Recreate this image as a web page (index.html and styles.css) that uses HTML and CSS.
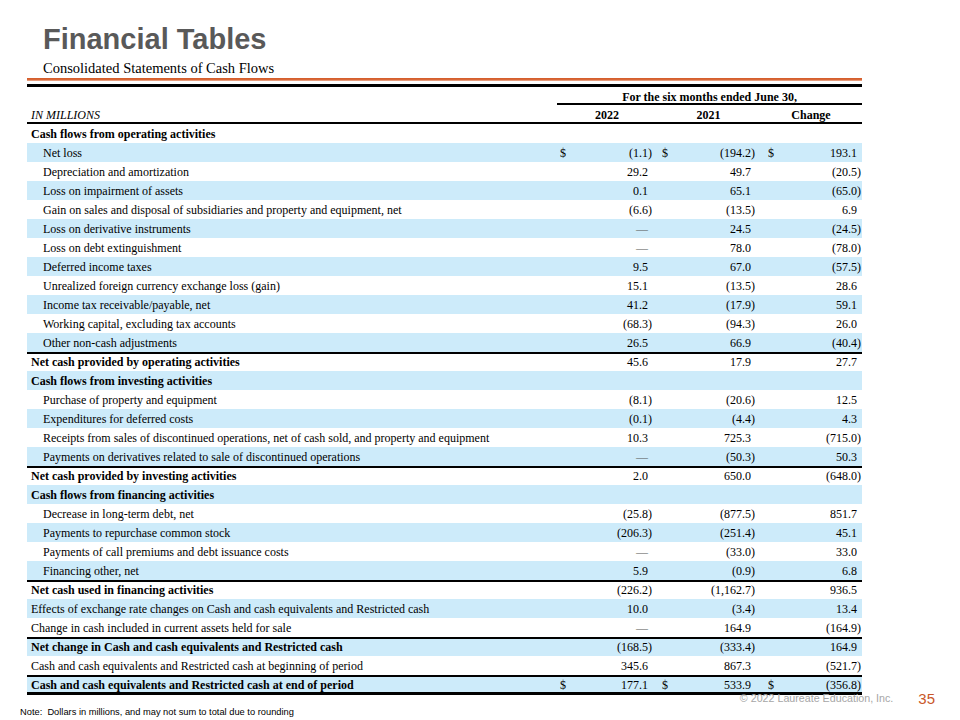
FILE: index.html
```html
<!DOCTYPE html>
<html lang="en">

<head>
    <meta charset="UTF-8">
    <title>Financial Tables</title>
    <link rel="stylesheet" href="styles.css">
</head>

<body>
    <div class="slide">
        <h1 class="title">Financial Tables</h1>
        <h2 class="subtitle">Consolidated Statements of Cash Flows</h2>
        <div class="rule-orange"></div>
        <div class="rule-black"></div>

        <table class="cf">
            <colgroup>
                <col class="c-label">
                <col class="c-d1">
                <col class="c-v1">
                <col class="c-d2">
                <col class="c-v2">
                <col class="c-d3">
                <col class="c-v3">
            </colgroup>
            <thead>
                <tr class="h1">
                    <th></th>
                    <th colspan="6" class="period">For the six months ended June 30,</th>
                </tr>
                <tr class="h2">
                    <th class="units">IN MILLIONS</th>
                    <th colspan="2">2022</th>
                    <th colspan="2">2021</th>
                    <th colspan="2">Change</th>
                </tr>
            </thead>
            <tbody>
                <tr class="sec"><td>Cash flows from operating activities</td><td></td><td></td><td></td><td></td><td></td><td></td></tr>
                <tr class="band"><td class="ind">Net loss</td><td class="d1">$</td><td class="v1">(1.1)</td><td class="d2">$</td><td class="v2">(194.2)</td><td class="d3">$</td><td class="v3"><span class="p">193.1</span></td></tr>
                <tr><td class="ind">Depreciation and amortization</td><td></td><td class="v1"><span class="p">29.2</span></td><td></td><td class="v2"><span class="p">49.7</span></td><td></td><td class="v3">(20.5)</td></tr>
                <tr class="band"><td class="ind">Loss on impairment of assets</td><td></td><td class="v1"><span class="p">0.1</span></td><td></td><td class="v2"><span class="p">65.1</span></td><td></td><td class="v3">(65.0)</td></tr>
                <tr><td class="ind">Gain on sales and disposal of subsidiaries and property and equipment, net</td><td></td><td class="v1">(6.6)</td><td></td><td class="v2">(13.5)</td><td></td><td class="v3"><span class="p">6.9</span></td></tr>
                <tr class="band"><td class="ind">Loss on derivative instruments</td><td></td><td class="v1"><span class="p dash">—</span></td><td></td><td class="v2"><span class="p">24.5</span></td><td></td><td class="v3">(24.5)</td></tr>
                <tr><td class="ind">Loss on debt extinguishment</td><td></td><td class="v1"><span class="p dash">—</span></td><td></td><td class="v2"><span class="p">78.0</span></td><td></td><td class="v3">(78.0)</td></tr>
                <tr class="band"><td class="ind">Deferred income taxes</td><td></td><td class="v1"><span class="p">9.5</span></td><td></td><td class="v2"><span class="p">67.0</span></td><td></td><td class="v3">(57.5)</td></tr>
                <tr><td class="ind">Unrealized foreign currency exchange loss (gain)</td><td></td><td class="v1"><span class="p">15.1</span></td><td></td><td class="v2">(13.5)</td><td></td><td class="v3"><span class="p">28.6</span></td></tr>
                <tr class="band"><td class="ind">Income tax receivable/payable, net</td><td></td><td class="v1"><span class="p">41.2</span></td><td></td><td class="v2">(17.9)</td><td></td><td class="v3"><span class="p">59.1</span></td></tr>
                <tr><td class="ind">Working capital, excluding tax accounts</td><td></td><td class="v1">(68.3)</td><td></td><td class="v2">(94.3)</td><td></td><td class="v3"><span class="p">26.0</span></td></tr>
                <tr class="band"><td class="ind">Other non-cash adjustments</td><td></td><td class="v1"><span class="p">26.5</span></td><td></td><td class="v2"><span class="p">66.9</span></td><td></td><td class="v3">(40.4)</td></tr>
                <tr class="total"><td class="b">Net cash provided by operating activities</td><td></td><td class="v1"><span class="p">45.6</span></td><td></td><td class="v2"><span class="p">17.9</span></td><td></td><td class="v3"><span class="p">27.7</span></td></tr>
                <tr class="band sec"><td>Cash flows from investing activities</td><td></td><td></td><td></td><td></td><td></td><td></td></tr>
                <tr><td class="ind">Purchase of property and equipment</td><td></td><td class="v1">(8.1)</td><td></td><td class="v2">(20.6)</td><td></td><td class="v3"><span class="p">12.5</span></td></tr>
                <tr class="band"><td class="ind">Expenditures for deferred costs</td><td></td><td class="v1">(0.1)</td><td></td><td class="v2">(4.4)</td><td></td><td class="v3"><span class="p">4.3</span></td></tr>
                <tr><td class="ind">Receipts from sales of discontinued operations, net of cash sold, and property and equipment</td><td></td><td class="v1"><span class="p">10.3</span></td><td></td><td class="v2"><span class="p">725.3</span></td><td></td><td class="v3">(715.0)</td></tr>
                <tr class="band"><td class="ind">Payments on derivatives related to sale of discontinued operations</td><td></td><td class="v1"><span class="p dash">—</span></td><td></td><td class="v2">(50.3)</td><td></td><td class="v3"><span class="p">50.3</span></td></tr>
                <tr class="total"><td class="b">Net cash provided by investing activities</td><td></td><td class="v1"><span class="p">2.0</span></td><td></td><td class="v2"><span class="p">650.0</span></td><td></td><td class="v3">(648.0)</td></tr>
                <tr class="band sec"><td>Cash flows from financing activities</td><td></td><td></td><td></td><td></td><td></td><td></td></tr>
                <tr><td class="ind">Decrease in long-term debt, net</td><td></td><td class="v1">(25.8)</td><td></td><td class="v2">(877.5)</td><td></td><td class="v3"><span class="p">851.7</span></td></tr>
                <tr class="band"><td class="ind">Payments to repurchase common stock</td><td></td><td class="v1">(206.3)</td><td></td><td class="v2">(251.4)</td><td></td><td class="v3"><span class="p">45.1</span></td></tr>
                <tr><td class="ind">Payments of call premiums and debt issuance costs</td><td></td><td class="v1"><span class="p dash">—</span></td><td></td><td class="v2">(33.0)</td><td></td><td class="v3"><span class="p">33.0</span></td></tr>
                <tr class="band"><td class="ind">Financing other, net</td><td></td><td class="v1"><span class="p">5.9</span></td><td></td><td class="v2">(0.9)</td><td></td><td class="v3"><span class="p">6.8</span></td></tr>
                <tr class="total"><td class="b">Net cash used in financing activities</td><td></td><td class="v1">(226.2)</td><td></td><td class="v2">(1,162.7)</td><td></td><td class="v3"><span class="p">936.5</span></td></tr>
                <tr class="band"><td>Effects of exchange rate changes on Cash and cash equivalents and Restricted cash</td><td></td><td class="v1"><span class="p">10.0</span></td><td></td><td class="v2">(3.4)</td><td></td><td class="v3"><span class="p">13.4</span></td></tr>
                <tr><td>Change in cash included in current assets held for sale</td><td></td><td class="v1"><span class="p dash">—</span></td><td></td><td class="v2"><span class="p">164.9</span></td><td></td><td class="v3">(164.9)</td></tr>
                <tr class="band total"><td class="b">Net change in Cash and cash equivalents and Restricted cash</td><td></td><td class="v1">(168.5)</td><td></td><td class="v2">(333.4)</td><td></td><td class="v3"><span class="p">164.9</span></td></tr>
                <tr><td>Cash and cash equivalents and Restricted cash at beginning of period</td><td></td><td class="v1"><span class="p">345.6</span></td><td></td><td class="v2"><span class="p">867.3</span></td><td></td><td class="v3">(521.7)</td></tr>
                <tr class="band total last"><td class="b">Cash and cash equivalents and Restricted cash at end of period</td><td class="d1">$</td><td class="v1"><span class="p">177.1</span></td><td class="d2">$</td><td class="v2"><span class="p">533.9</span></td><td class="d3">$</td><td class="v3">(356.8)</td></tr>
            </tbody>
        </table>

        <div class="footer">
            <span class="copy">© 2022 Laureate Education, Inc.</span>
            <span class="page">35</span>
        </div>
        <div class="note">Note:&nbsp; Dollars in millions, and may not sum to total due to rounding</div>
    </div>
</body>

</html>
```
FILE: styles.css
```css
* {
    padding: 0;
    margin: 0;
}

body {
    background: #fff;
    color: #000;
    font-family: "Liberation Serif", "Times New Roman", serif;
}

.slide {
    width: 960px;
    height: 720px;
    overflow: hidden;
}

.title {
    font-family: "Liberation Sans", Arial, sans-serif;
    font-weight: bold;
    font-size: 29px;
    line-height: 34px;
    color: #595959;
    padding: 22px 0 0 43px;
}

.subtitle {
    font-weight: normal;
    font-size: 14.5px;
    line-height: 18px;
    padding: 3px 0 0 43px;
}

.rule-orange {
    margin: 1px 98px 0 27px;
    height: 3px;
    background: linear-gradient(#d45c28, #d9693a 60%, #f1c0aa);
}

.rule-black {
    margin: 3px 98px 0 27px;
    height: 3px;
    background: #000;
}

.cf {
    margin-left: 27px;
    width: 835px;
    table-layout: fixed;
    border-collapse: collapse;
    font-size: 12px;
}

.c-label { width: 530px; }
.c-d1 { width: 13px; }
.c-v1 { width: 87px; }
.c-d2 { width: 13px; }
.c-v2 { width: 90px; }
.c-d3 { width: 15px; }
.c-v3 { width: 87px; }

.cf tr {
    height: 19px;
}

.cf th,
.cf td {
    padding: 2px 0 0;
    line-height: 17px;
    white-space: nowrap;
    vertical-align: top;
}

.cf thead th {
    font-weight: bold;
    text-align: center;
}

.cf tr.h1 {
    height: 18px;
}

.cf .h1 th {
    line-height: 16px;
}

.cf .h1 .period {
    box-shadow: inset 0 -2px 0 #000;
}

.cf .h2 th {
    box-shadow: inset 0 -2px 0 #000;
}

.cf .h2 .units {
    text-align: left;
    font-weight: normal;
    font-style: italic;
    padding-left: 4px;
}

.cf td:first-child {
    padding-left: 4px;
}

.cf td.ind {
    padding-left: 16px;
}

.cf .sec td,
.cf td.b {
    font-weight: bold;
}

.cf tr.band {
    background: #cdebfa;
}

.cf tr.total td {
    box-shadow: inset 0 2px 0 #000;
}

.cf tr.last {
    height: 20px;
}

.cf tr.last td {
    box-shadow: inset 0 2px 0 #000, inset 0 -3px 0 #000;
}

.cf .d1 { padding-left: 3px; }
.cf .d2 { padding-left: 5px; }
.cf .d3 { padding-left: 8px; }

.cf .v1,
.cf .v2,
.cf .v3 {
    text-align: right;
}

.cf .v1 { padding-right: 5px; }
.cf .v2 { padding-right: 5px; }
.cf .v3 { padding-right: 1px; }

.p {
    padding-right: 4px;
}

.dash {
    color: #555;
}

.footer {
    display: flex;
    justify-content: flex-end;
    align-items: center;
    height: 14px;
    margin-top: -4px;
    padding-right: 25px;
    font-family: "Liberation Sans", Arial, sans-serif;
}

.copy {
    font-size: 10.7px;
    color: #a6a6a6;
    margin-right: 25px;
}

.page {
    font-size: 15px;
    color: #c9572a;
}

.note {
    font-family: "Liberation Sans", Arial, sans-serif;
    font-size: 9.3px;
    line-height: 12px;
    padding: 1px 0 0 20px;
}
```
